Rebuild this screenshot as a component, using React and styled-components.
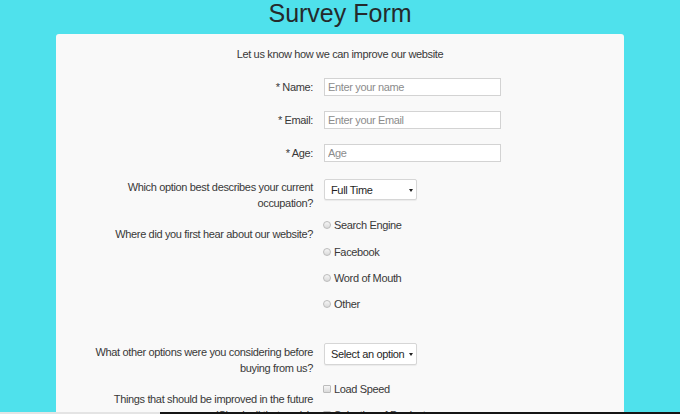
import styled, { createGlobalStyle } from 'styled-components';

const GlobalStyle = createGlobalStyle`
  body {
    margin: 0;
    background: #4fe1ec;
    font-family: "Liberation Sans", Arial, sans-serif;
  }
`;

const Title = styled.h1`
  margin: 0 0 8px;
  font-size: 25px;
  line-height: 26px;
  font-weight: normal;
  text-align: center;
  color: #252a2c;
`;

const Card = styled.form`
  width: 568px;
  margin: 0 auto;
  padding: 12px 0 40px;
  background: #f9f9f9;
  border-radius: 3px;
  font-size: 11px;
  letter-spacing: -0.35px;
  color: #383838;
`;

const Intro = styled.p`
  margin: 0 0 16px;
  line-height: 16px;
  text-align: center;
`;

const Row = styled.div`
  display: grid;
  grid-template-columns: 257px 177px;
  column-gap: 11px;
  align-items: start;
  margin-bottom: ${p => p.$gap ?? 15}px;
`;

const Label = styled.label`
  text-align: right;
  line-height: ${p => p.$lh || 16}px;
  padding-top: ${p => p.$pt || 0}px;
`;

const TextInput = styled.input`
  box-sizing: border-box;
  width: 177px;
  height: 18px;
  margin: 0;
  padding: 0 3px;
  border: 1px solid #d3d3d3;
  background: #fff;
  font: inherit;
  letter-spacing: inherit;
  color: #333;
  outline: none;

  &::placeholder {
    color: #8c8c8c;
  }
`;

const SelectWrap = styled.div`
  position: relative;
  width: 93px;
`;

const Select = styled.select`
  appearance: none;
  box-sizing: border-box;
  width: 93px;
  height: ${p => p.$h || 21}px;
  margin: 0;
  padding: 0 0 0 6px;
  border: 1px solid #d6d6d6;
  border-radius: 2px;
  box-shadow: 0 1px 1px rgba(0, 0, 0, 0.06);
  background: #fff;
  font: inherit;
  letter-spacing: inherit;
  color: #1f1f1f;
  outline: none;
`;

const Caret = styled.span`
  position: absolute;
  right: 4px;
  top: 50%;
  margin-top: -1px;
  border-left: 2.5px solid transparent;
  border-right: 2.5px solid transparent;
  border-top: 3px solid #222;
  pointer-events: none;
`;

const Options = styled.div`
  display: flex;
  flex-direction: column;
  margin-left: -1.5px;
`;

const Option = styled.label`
  display: flex;
  align-items: center;
  gap: 3.5px;
  height: ${p => p.$h || 26.4}px;
  white-space: nowrap;
`;

const Mark = styled.input`
  appearance: none;
  box-sizing: border-box;
  width: 8px;
  height: 8px;
  margin: 0;
  border: 1px solid #bcbcbc;
  border-radius: ${p => (p.type === 'radio' ? '50%' : '1px')};
  background: linear-gradient(#f6f6f6, #dadada);
`;

const BottomStrip = styled.div`
  position: fixed;
  left: 0;
  right: 0;
  bottom: 0;
  height: 2px;
  background: linear-gradient(to right, #e4e4e4 160px, #151515 160px);
`;

const sources = ['Search Engine', 'Facebook', 'Word of Mouth', 'Other'];
const improvements = ['Load Speed', 'Selection of Products', 'Customer Service', 'Prices'];

export default function App() {
  return (
    <>
      <GlobalStyle />
      <Title>Survey Form</Title>
      <Card>
        <Intro>Let us know how we can improve our website</Intro>

        <Row>
          <Label $lh={18} htmlFor="name">* Name:</Label>
          <TextInput id="name" placeholder="Enter your name" />
        </Row>
        <Row>
          <Label $lh={18} htmlFor="email">* Email:</Label>
          <TextInput id="email" placeholder="Enter your Email" />
        </Row>
        <Row $gap={17}>
          <Label $lh={18} htmlFor="age">* Age:</Label>
          <TextInput id="age" placeholder="Age" />
        </Row>

        <Row $gap={1}>
          <Label htmlFor="occupation">
            Which option best describes your current<br />occupation?
          </Label>
          <SelectWrap>
            <Select id="occupation" defaultValue="full">
              <option value="full">Full Time</option>
              <option value="part">Part Time</option>
              <option value="student">Student</option>
            </Select>
            <Caret />
          </SelectWrap>
        </Row>

        <Row $gap={25.4}>
          <Label $pt={14}>Where did you first hear about our website?</Label>
          <Options>
            {sources.map(s => (
              <Option key={s}>
                <Mark type="radio" name="source" />
                {s}
              </Option>
            ))}
          </Options>
        </Row>

        <Row $gap={0}>
          <Label $pt={1} htmlFor="others">
            What other options were you considering before<br />buying from us?
          </Label>
          <SelectWrap>
            <Select id="others" $h={22} defaultValue="">
              <option value="">Select an option</option>
              <option value="a">Other store</option>
            </Select>
            <Caret />
          </SelectWrap>
        </Row>

        <Row>
          <Label $pt={15}>
            Things that should be improved in the future<br />(Check all that apply):
          </Label>
          <Options>
            {improvements.map(s => (
              <Option key={s} $h={26}>
                <Mark type="checkbox" />
                {s}
              </Option>
            ))}
          </Options>
        </Row>
      </Card>
      <BottomStrip />
    </>
  );
}
